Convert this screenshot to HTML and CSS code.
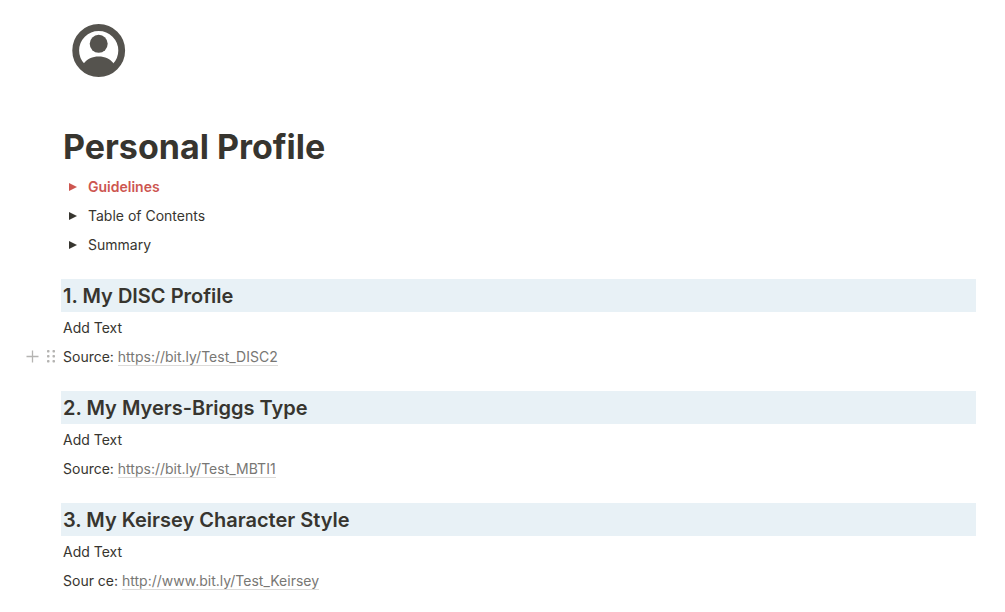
FILE: index.html
```html
<!DOCTYPE html>
<html lang="en">
<head>
    <meta charset="utf-8">
    <title>Personal Profile</title>
    <link rel="stylesheet" href="styles.css">
</head>
<body>

<main class="page">
    <svg class="page-icon" viewBox="0 0 54 54" aria-hidden="true">
        <circle cx="26.700" cy="26.500" r="23" fill="none" stroke="#55534e" stroke-width="6.800"/>
        <circle cx="26.700" cy="19.800" r="9" fill="#55534e"/>
        <path d="M11.700 39.500C15 35 20.500 32.500 26.700 32.500s11.700 2.500 15 7C39 46 33 50 26.700 50s-12.300-4-15-10.500z" fill="#55534e"/>
    </svg>

    <h1>Personal Profile</h1>

    <details class="toggle red">
        <summary><svg class="arrow" viewBox="0 0 8 8"><path d="M0 0l8 4-8 4z"/></svg>Guidelines</summary>
    </details>
    <details class="toggle">
        <summary><svg class="arrow" viewBox="0 0 8 8"><path d="M0 0l8 4-8 4z"/></svg>Table of Contents</summary>
    </details>
    <details class="toggle">
        <summary><svg class="arrow" viewBox="0 0 8 8"><path d="M0 0l8 4-8 4z"/></svg>Summary</summary>
    </details>

    <section>
        <h2>1. My DISC Profile</h2>
        <p>Add Text</p>
        <div class="active-block">
            <button class="handle" type="button" aria-label="Add block">
                <svg width="13" height="13" viewBox="0 0 13 13"><path d="M6.500 0.500v12M0.500 6.500h12" stroke="#b5b4b2" stroke-width="1.300"/></svg>
            </button>
            <button class="handle" type="button" aria-label="Move block">
                <svg width="8" height="13" viewBox="0 0 8 13" fill="#b5b4b2">
                    <rect x="0" y="0" width="2.500" height="2.500" rx="0.700"/>
                    <rect x="5.500" y="0" width="2.500" height="2.500" rx="0.700"/>
                    <rect x="0" y="5" width="2.500" height="2.500" rx="0.700"/>
                    <rect x="5.500" y="5" width="2.500" height="2.500" rx="0.700"/>
                    <rect x="0" y="10" width="2.500" height="2.500" rx="0.700"/>
                    <rect x="5.500" y="10" width="2.500" height="2.500" rx="0.700"/>
                </svg>
            </button>
            <p>Source: <a href="https://bit.ly/Test_DISC2">https://bit.ly/Test_DISC2</a></p>
        </div>
    </section>

    <section>
        <h2>2. My Myers-Briggs Type</h2>
        <p>Add Text</p>
        <p>Source: <a href="https://bit.ly/Test_MBTI1">https://bit.ly/Test_MBTI1</a></p>
    </section>

    <section>
        <h2>3. My Keirsey Character Style</h2>
        <p>Add Text</p>
        <p>Sour ce: <a href="http://www.bit.ly/Test_Keirsey">http://www.bit.ly/Test_Keirsey</a></p>
    </section>
</main>

</body>
</html>
```

FILE: styles.css
```css
* {
    box-sizing: border-box;
}

body {
    margin: 0;
    background-color: white;
    color: #37352f;
    font-family: Inter, "Liberation Sans", sans-serif;
    font-size: 14px;
    line-height: 29px;
}

.page {
    padding: 24px 29px 16px 61px;
}

.page-icon {
    display: block;
    width: 54px;
    height: 54px;
    margin-left: 11px;
}

h1 {
    margin: 47px 0 3px;
    padding: 0 2px;
    font-size: 34px;
    line-height: 44px;
    font-weight: 700;
}

.toggle summary {
    display: flex;
    align-items: center;
    gap: 11px;
    padding-left: 8px;
    list-style: none;
    cursor: pointer;
}

.arrow {
    width: 8px;
    height: 8px;
    fill: currentColor;
}

.red {
    color: #cd5650;
    font-weight: 600;
}

section {
    margin-top: 20px;
}

h2 {
    margin: 0 0 1px;
    padding: 1px 2px 0;
    background-color: #e8f1f6;
    font-size: 20px;
    line-height: 32px;
    font-weight: 600;
}

p {
    margin: 0;
    padding: 0 2px;
}

a {
    color: #787774;
    text-decoration: none;
    border-bottom: 1px solid #dcdbd9;
}

/* add and drag handles hang in the left margin */
.active-block {
    display: flex;
    align-items: center;
    margin-left: -35px;
}

.handle {
    display: flex;
    margin-right: 8px;
    padding: 0;
    border: 0;
    background: none;
    cursor: pointer;
}

.handle + .handle {
    margin-right: 6px;
}
```
